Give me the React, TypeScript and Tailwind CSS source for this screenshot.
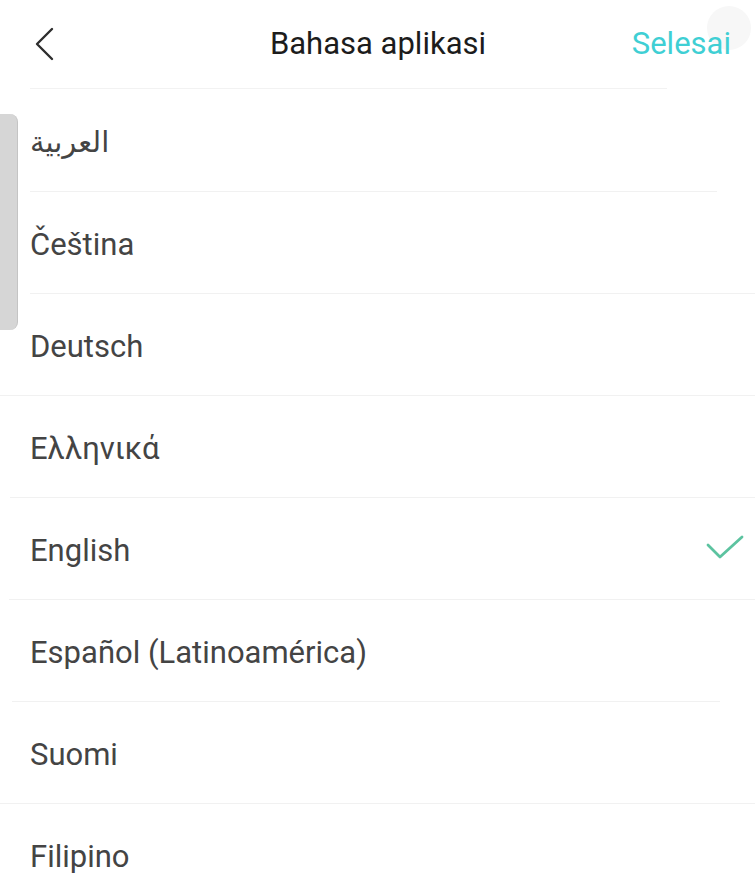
// separator spans vary a little in the capture, so each row keeps its own
const languages = [
  { label: "العربية", rtl: true, line: "ml-[30px] mr-[38px]" },
  { label: "Čeština", line: "ml-[30px] mr-0" },
  { label: "Deutsch", line: "ml-0 mr-0" },
  { label: "Ελληνικά", line: "ml-[10px] mr-0" },
  { label: "English", selected: true, line: "ml-[9px] mr-0" },
  { label: "Español (Latinoamérica)", line: "ml-[12px] mr-[35px]" },
  { label: "Suomi", line: "ml-0 mr-0" },
  { label: "Filipino", line: "" },
];

export default function App() {
  return (
    <div className="relative w-[755px] h-[893px] overflow-hidden bg-white font-['Roboto','Liberation_Sans',sans-serif]">
      {/* faint touch indicator in the corner */}
      <div className="absolute right-[4px] top-[6px] h-[44px] w-[44px] rounded-full bg-[#f7f7f7]" />

      {/* Header */}
      <header className="relative grid h-[88px] grid-cols-[1fr_auto_1fr] items-center pl-[34px] pr-[24px]">
        <button className="flex h-[40px] w-[24px] items-center">
          <svg width="22" height="34" viewBox="0 0 22 34" fill="none">
            <polyline points="18,2 3,17 18,32" stroke="#2e2e2e" strokeWidth="2.4" strokeLinecap="round" strokeLinejoin="round" />
          </svg>
        </button>
        <h1 className="whitespace-nowrap pr-[9px] text-[31px] text-[#1c1c1c]">Bahasa aplikasi</h1>
        <button className="justify-self-end text-[31px] text-[#3fcfd4]">Selesai</button>
      </header>
      <div className="ml-[30px] mr-[88px] h-px bg-[#f2f2f2]" />

      {/* Language list */}
      <ul>
        {languages.map((lang, i) => (
          <li key={lang.label}>
            <div
              className={`flex items-center justify-between pl-[30px] pr-[10px] pt-[5px] ${
                i === 0 ? "h-[102px]" : "h-[101px]"
              }`}
            >
              <span
                className="text-[31px] text-[#444444]"
                dir={lang.rtl ? "rtl" : undefined}
                style={lang.rtl ? { fontFamily: "'DejaVu Sans', sans-serif", fontSize: 29 } : undefined}
              >
                {lang.label}
              </span>
              {lang.selected && (
                <svg width="40" height="28" viewBox="0 0 40 28" fill="none" className="-mt-[6px]">
                  <polyline points="3,11 15,23 37,3" stroke="#5cc3a0" strokeWidth="2.8" strokeLinecap="round" strokeLinejoin="round" />
                </svg>
              )}
            </div>
            {lang.line && <div className={`h-px bg-[#f1f1f1] ${lang.line}`} />}
          </li>
        ))}
      </ul>

      {/* scroll handle at the left edge */}
      <div className="absolute left-0 top-[114px] h-[216px] w-[18px] rounded-r-[8px] border-r border-[#c4c4c4] bg-[#d6d6d6]" />
    </div>
  );
}
